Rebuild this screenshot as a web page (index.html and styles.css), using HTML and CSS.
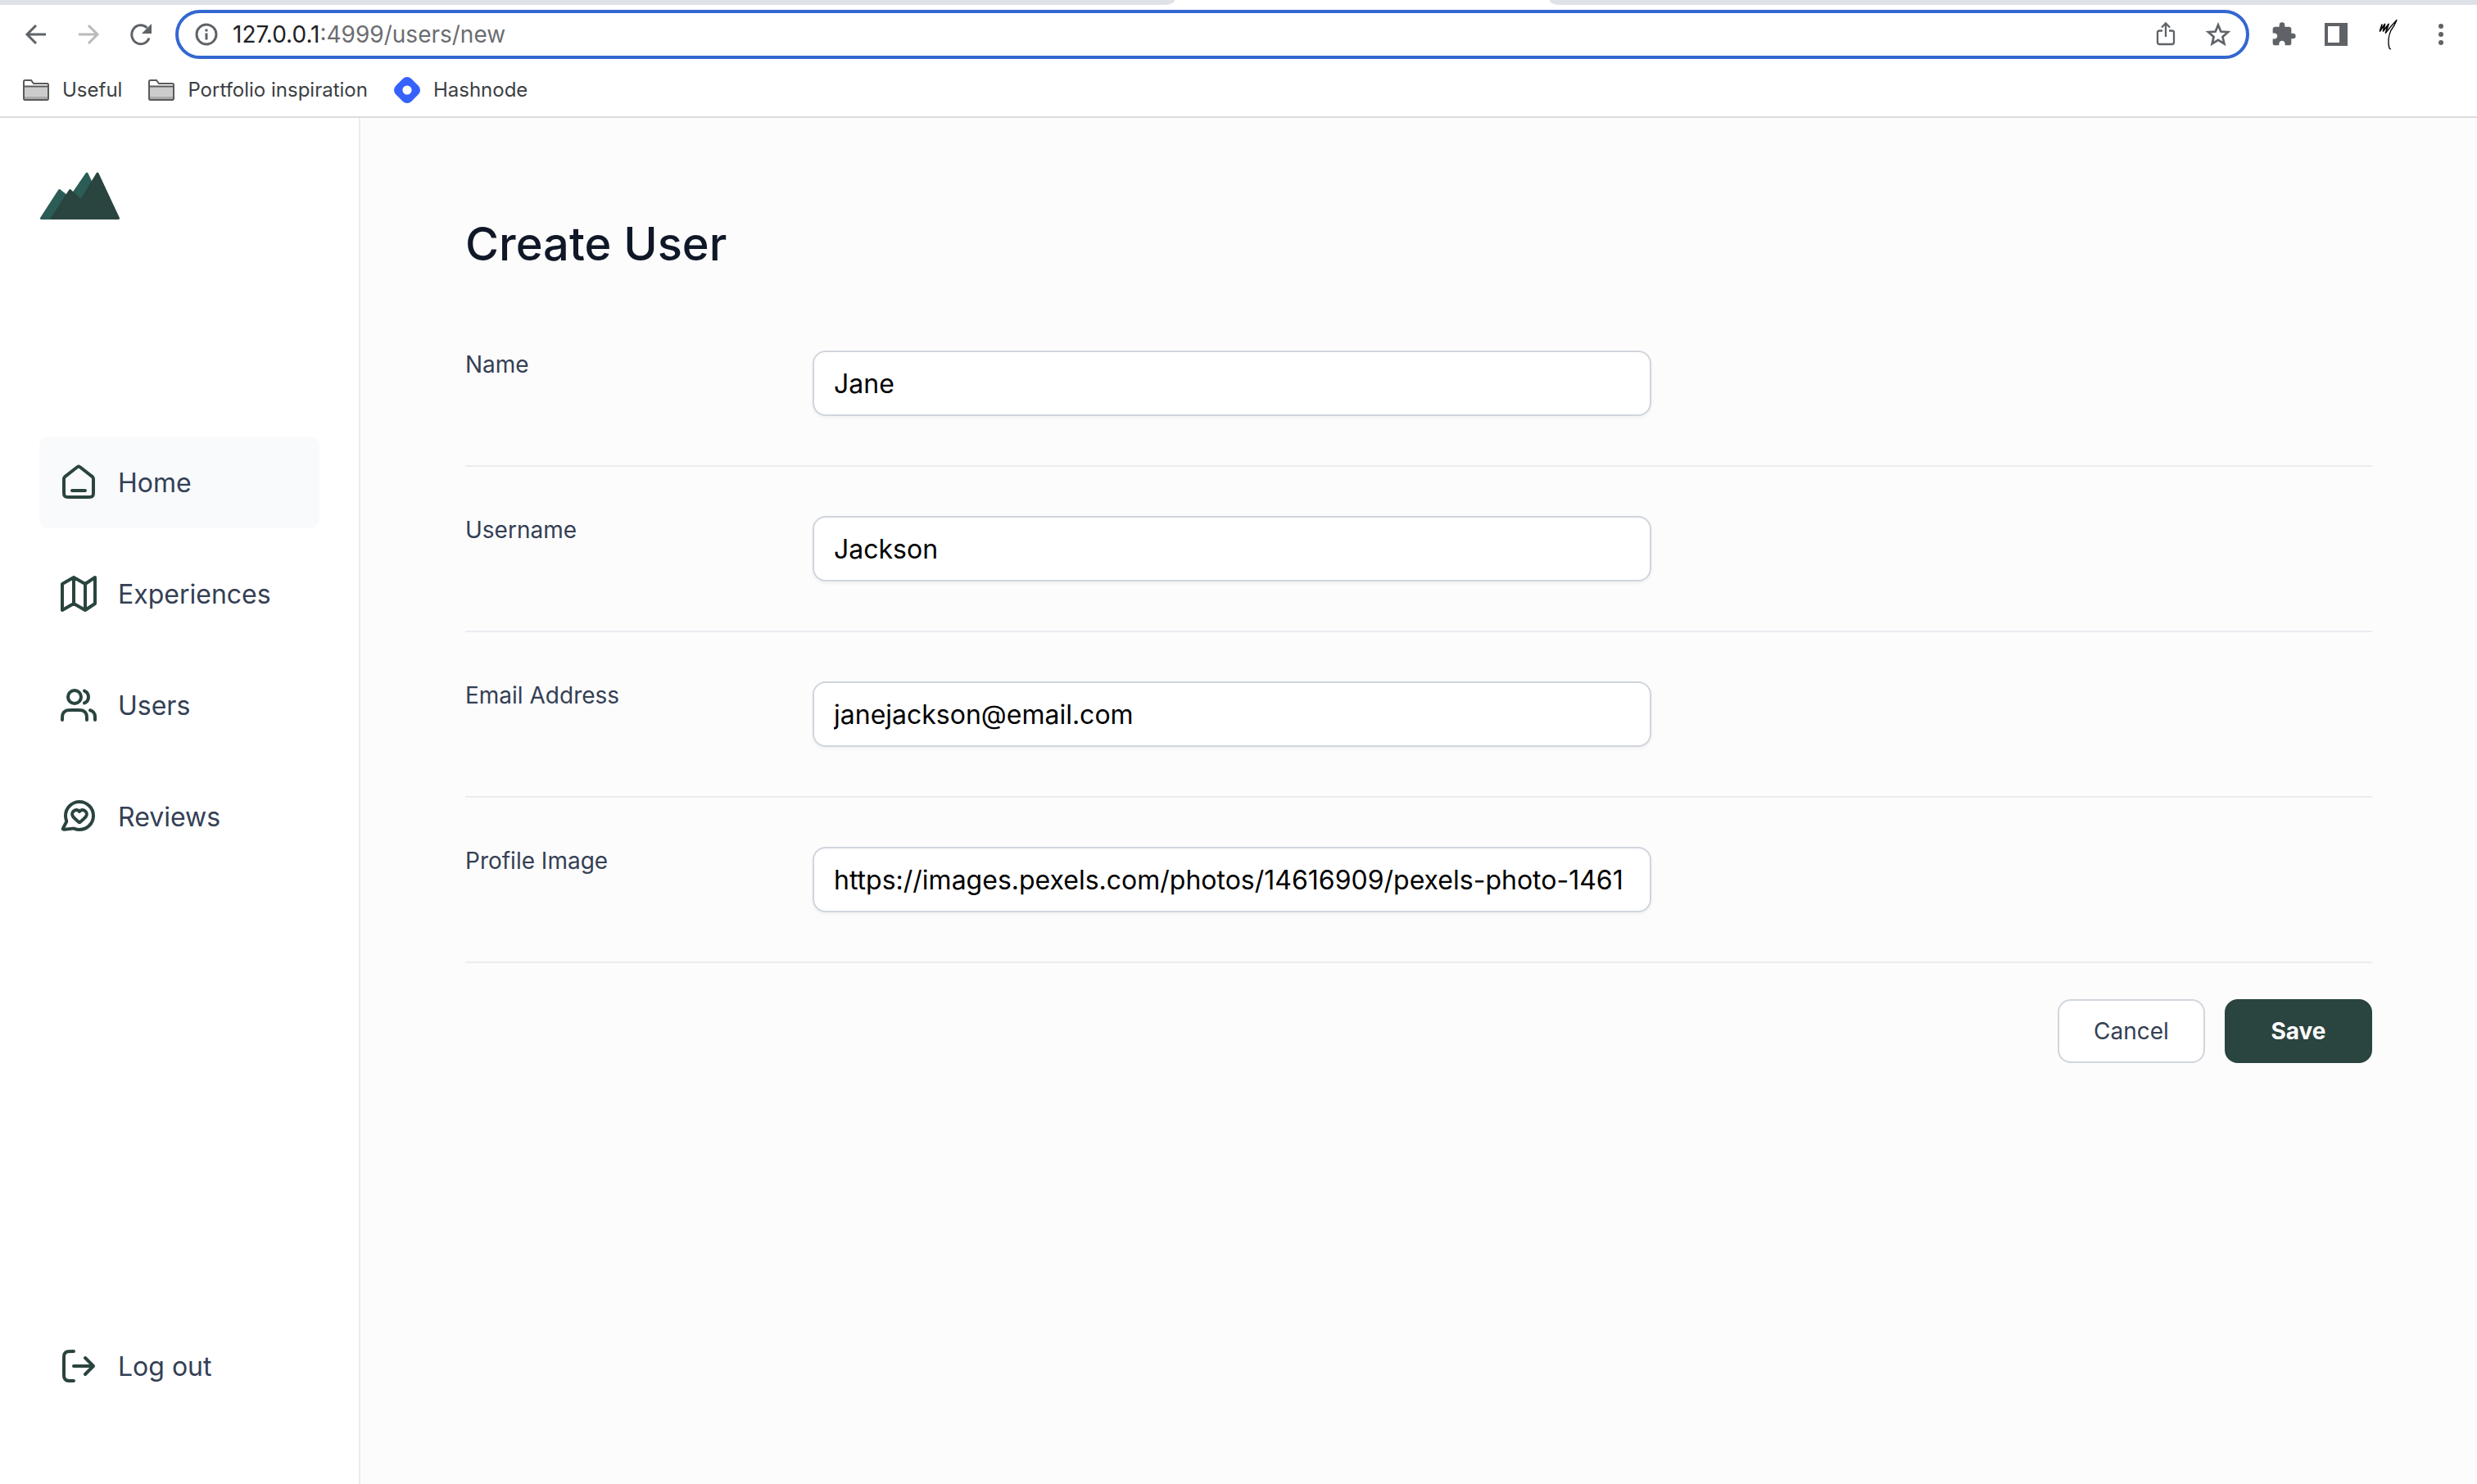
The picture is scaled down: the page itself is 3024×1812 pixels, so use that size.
FILE: index.html
```html
<!DOCTYPE html>
<html lang="en">
<head>
<meta charset="utf-8">
<title>Create User</title>
<link rel="stylesheet" href="styles.css">
</head>
<body>
<header class="browser">
  <div class="tabstrip"><span class="tabs-before"></span><span class="tab-active"></span><span class="tabs-after"></span></div>
  <div class="toolbar">
    <div class="history">
      <button class="tool" type="button" aria-label="Back"><svg width="32" height="32" viewBox="0 0 32 32"><path d="M28 16H5M16 5L5 16l11 11" fill="none" stroke="#5f6368" stroke-width="3"/></svg></button>
      <button class="tool" type="button" aria-label="Forward"><svg width="32" height="32" viewBox="0 0 32 32"><path d="M4 16h23M16 5l11 11-11 11" fill="none" stroke="#bababa" stroke-width="3"/></svg></button>
      <button class="tool" type="button" aria-label="Reload"><svg width="32" height="32" viewBox="0 0 32 32"><path d="M26 20.500A11 11.500 0 1 1 23.500 8" fill="none" stroke="#5f6368" stroke-width="3"/><path d="M29 3v12H17z" fill="#5f6368"/></svg></button>
    </div>
    <div class="omnibox">
      <svg width="28" height="28" viewBox="0 0 28 28"><circle cx="14" cy="14" r="12" fill="none" stroke="#5f6368" stroke-width="3"/><path d="M14 12.500v8M14 7.500v3" stroke="#5f6368" stroke-width="3"/></svg>
      <div class="url" role="textbox" aria-label="Address" contenteditable="true" spellcheck="false"><span class="host">127.0.0.1</span>:4999/users/new</div>
      <button class="tool" type="button" aria-label="Share"><svg width="32" height="32" viewBox="0 0 32 32"><path d="M12 11.500H8.500Q6 11.500 6 14v11.500Q6 28 8.500 28h15q2.500 0 2.500-2.500V14Q26 11.500 23.500 11.500H20M16 19V3M11 7.500l5-5 5 5" fill="none" stroke="#5f6368" stroke-width="2.300"/></svg></button>
      <button class="tool" type="button" aria-label="Bookmark this page"><svg width="32" height="32" viewBox="0 0 32 32"><path d="M16 4.500l3.300 8 8.700.700-6.600 5.700 2 8.500L16 22.900l-7.400 4.500 2-8.500L4 13.200l8.700-.700z" fill="none" stroke="#5f6368" stroke-width="2.700"/></svg></button>
    </div>
    <div class="extensions">
      <button class="tool" type="button" aria-label="Extensions"><svg width="32" height="32" viewBox="0 0 24 24"><path d="M20.500 11H19V7c0-1.100-.9-2-2-2h-4V3.500a2.500 2.500 0 0 0-5 0V5H4c-1.100 0-1.990.9-1.990 2v3.800H3.500c1.490 0 2.700 1.210 2.700 2.700s-1.210 2.700-2.700 2.700H2V20c0 1.100.9 2 2 2h3.800v-1.500c0-1.490 1.210-2.700 2.700-2.700s2.700 1.210 2.700 2.700V22H17c1.100 0 2-.9 2-2v-4h1.500a2.500 2.500 0 0 0 0-5z" fill="#5f6368"/></svg></button>
      <button class="tool" type="button" aria-label="Side panel"><svg width="32" height="32" viewBox="0 0 32 32"><path fill-rule="evenodd" d="M2 2h28v28H2zM6 6v20h14V6z" fill="#5f6368"/></svg></button>
      <button class="tool" type="button" aria-label="Profile"><svg width="32" height="40" viewBox="0 0 32 40"><g fill="none" stroke="#000" stroke-linecap="round" stroke-linejoin="round"><path d="M8 8L5.500 16 11.500 7.500 9.500 16 16 7.500 12.500 18" stroke-width="1.700"/><path d="M12.500 18Q18 11 26 2.500Q23 10 19 15Q14 26 17 37l1.500 1" stroke-width="1.300"/></g></svg></button>
      <button class="tool" type="button" aria-label="Menu"><svg width="32" height="32" viewBox="0 0 32 32" fill="#5f6368"><circle cx="16" cy="6" r="3"/><circle cx="16" cy="16" r="3"/><circle cx="16" cy="26" r="3"/></svg></button>
    </div>
  </div>
  <nav class="bookmarks" aria-label="Bookmarks">
    <a class="bookmark" href="#"><svg width="32" height="26" viewBox="0 0 32 26"><path d="M1 8h30v16H1z" fill="#ccc"/><path d="M1 21h30v3H1z" fill="#aaa"/><path d="M1 23V2.500Q1 1 2.500 1H10l3 4h16.500Q31 5 31 6.500V23q0 2-1.500 2h-27Q1 25 1 23zM1 8.500h30" fill="none" stroke="#5a5a5a" stroke-width="2"/></svg>Useful</a>
    <a class="bookmark" href="#"><svg width="32" height="26" viewBox="0 0 32 26"><path d="M1 8h30v16H1z" fill="#ccc"/><path d="M1 21h30v3H1z" fill="#aaa"/><path d="M1 23V2.500Q1 1 2.500 1H10l3 4h16.500Q31 5 31 6.500V23q0 2-1.500 2h-27Q1 25 1 23zM1 8.500h30" fill="none" stroke="#5a5a5a" stroke-width="2"/></svg>Portfolio inspiration</a>
    <a class="bookmark" href="#"><svg width="32" height="32" viewBox="0 0 32 32"><path fill-rule="evenodd" d="M2.200 10.700l8.500-8.500a7.500 7.500 0 0 1 10.600 0l8.500 8.500a7.500 7.500 0 0 1 0 10.600l-8.500 8.500a7.500 7.500 0 0 1-10.600 0l-8.500-8.500a7.500 7.500 0 0 1 0-10.600zM16 10.400a5.600 5.600 0 1 0 0 11.200 5.600 5.600 0 0 0 0-11.200z" fill="#3662fb"/></svg>Hashnode</a>
  </nav>
</header>
<div class="app">
  <aside class="sidebar">
    <a class="logo" href="#" aria-label="Dashboard"><svg width="98" height="60" viewBox="0 0 98 60" stroke-width="3" stroke-linejoin="round"><path d="M2.500 58.500L24.500 24.500 37 34.500 58 4l26 54.500z" fill="#2b5c56" stroke="#2b5c56"/><path d="M15.500 58.500L37.500 24.500 51 37 71 4l25.500 54.500z" fill="#2a443f" stroke="#2a443f"/></svg></a>
    <nav class="menu" aria-label="Main">
      <a class="item current" href="#"><svg class="icon" viewBox="0 0 24 24"><path d="M8 17H16M11.0177 2.764L4.23539 8.03912C3.78202 8.39175 3.55534 8.56806 3.39203 8.78886C3.24737 8.98444 3.1396 9.20478 3.07403 9.43905C3 9.70352 3 9.9907 3 10.5651V17.8C3 18.9201 3 19.4801 3.21799 19.908C3.40973 20.2843 3.71569 20.5903 4.09202 20.782C4.51984 21 5.07989 21 6.2 21H17.8C18.9201 21 19.4802 21 19.908 20.782C20.2843 20.5903 20.5903 20.2843 20.782 19.908C21 19.4801 21 18.9201 21 17.8V10.5651C21 9.9907 21 9.70352 20.926 9.43905C20.8604 9.20478 20.7526 8.98444 20.6079 8.78886C20.4447 8.56806 20.218 8.39175 19.7646 8.03913L12.9823 2.764C12.631 2.49075 12.4553 2.35412 12.2613 2.3016C12.0902 2.25526 11.9098 2.25526 11.7387 2.3016C11.5447 2.35412 11.369 2.49075 11.0177 2.764Z"/></svg><span class="item-text">Home</span></a>
      <a class="item" href="#"><svg class="icon" viewBox="0 0 24 24"><path d="M9 18L2 22V6L9 2M9 18L16 22M9 18V2M16 22L22 18V2L16 6M16 22V6M16 6L9 2"/></svg><span class="item-text">Experiences</span></a>
      <a class="item" href="#"><svg class="icon" viewBox="0 0 24 24"><path d="M22 21V19C22 17.1362 20.7252 15.5701 19 15.126M15.5 3.29076C16.9659 3.88415 18 5.32131 18 7C18 8.67869 16.9659 10.1159 15.5 10.7092M17 21C17 19.1362 17 18.2044 16.6955 17.4693C16.2895 16.4892 15.5108 15.7105 14.5307 15.3045C13.7956 15 12.8638 15 11 15H8C6.13623 15 5.20435 15 4.46927 15.3045C3.48915 15.7105 2.71046 16.4892 2.30448 17.4693C2 18.2044 2 19.1362 2 21M13.5 7C13.5 9.20914 11.7091 11 9.5 11C7.29086 11 5.5 9.20914 5.5 7C5.5 4.79086 7.29086 3 9.5 3C11.7091 3 13.5 4.79086 13.5 7Z"/></svg><span class="item-text">Users</span></a>
      <a class="item" href="#"><svg class="icon" viewBox="0 0 24 24"><path d="M21 11.5C21 16.1944 17.1944 20 12.5 20C11.4237 20 10.3939 19.8 9.44691 19.4353C9.27377 19.3687 9.1872 19.3353 9.11835 19.3194C9.05062 19.3037 9.00161 19.2972 8.93213 19.2945C8.86151 19.2918 8.78404 19.2998 8.62909 19.3158L3.50501 19.8455C3.01648 19.896 2.77221 19.9213 2.62812 19.8334C2.50262 19.7569 2.41712 19.6288 2.39423 19.4836C2.36794 19.3169 2.48466 19.1008 2.71811 18.6687L4.35472 15.6393C4.4895 15.3898 4.55689 15.2651 4.58741 15.1451C4.61756 15.0266 4.62485 14.9411 4.61518 14.8192C4.60539 14.6958 4.55127 14.5351 4.44302 14.2139C4.15563 13.361 4 12.4475 4 11.5C4 6.80558 7.80558 3 12.5 3C17.1944 3 21 6.80558 21 11.5Z"/><path d="M12.500 8.950C11.600 7.900 10.100 7.700 9.000 8.600C7.900 9.500 7.800 11.050 8.650 12.100C9.300 12.900 11.200 14.600 12.060 15.350C12.220 15.490 12.300 15.560 12.400 15.590C12.460 15.610 12.540 15.610 12.600 15.590C12.700 15.560 12.780 15.490 12.940 15.350C13.800 14.600 15.700 12.900 16.350 12.100C17.200 11.050 17.100 9.500 16.000 8.600C14.900 7.700 13.400 7.900 12.500 8.950Z"/></svg><span class="item-text">Reviews</span></a>
    </nav>
    <a class="item logout" href="#"><svg class="icon" viewBox="0 0 24 24"><path d="M16 17L21 12L16 7M21 12H9M9 3H7.8C6.11984 3 5.27976 3 4.63803 3.32698C4.07354 3.6146 3.6146 4.07354 3.32698 4.63803C3 5.27976 3 6.11984 3 7.8V16.2C3 17.8802 3 18.7202 3.32698 19.362C3.6146 19.9265 4.07354 20.3854 4.63803 20.673C5.27976 21 6.11984 21 7.8 21H9"/></svg><span class="item-text">Log out</span></a>
  </aside>
  <main class="content">
    <h1>Create User</h1>
    <form class="form">
      <div class="row"><label for="name">Name</label><input id="name" type="text" value="Jane"></div>
      <div class="row"><label for="username">Username</label><input id="username" type="text" value="Jackson"></div>
      <div class="row"><label for="email">Email Address</label><input id="email" type="text" value="janejackson@email.com"></div>
      <div class="row"><label for="image">Profile Image</label><input id="image" type="text" value="https://images.pexels.com/photos/14616909/pexels-photo-1461"></div>
      <div class="actions"><button class="button" type="button">Cancel</button><button class="button primary" type="submit">Save</button></div>
    </form>
  </main>
</div>
</body>
</html>
```
FILE: styles.css
```css
* { box-sizing: border-box; }

body {
  margin: 0;
  min-height: 100vh;
  display: flex;
  flex-direction: column;
  font-family: Inter, "Liberation Sans", sans-serif;
  background: #fcfcfc;
  color: #344054;
}

a { color: inherit; text-decoration: none; }
svg { display: block; flex: none; }

/* Browser frame */
.browser {
  background: #fff;
  border-bottom: 2px solid #dcdcdc;
}

.tabstrip { display: flex; height: 6px; }
.tabs-before, .tabs-after { background: #dee1e6; }
.tabs-before { flex: 1434; border-bottom-right-radius: 12px 6px; }
.tab-active { flex: 458; }
.tabs-after { flex: 1132; border-bottom-left-radius: 12px 6px; }

.toolbar {
  display: flex;
  align-items: center;
  height: 72px;
  padding: 0 28px;
}

.history, .extensions { display: flex; align-items: center; gap: 32px; }
.history { margin-right: 26px; }
.extensions { margin-left: 26px; }

.tool {
  display: flex;
  padding: 0;
  border: 0;
  background: none;
}

.omnibox {
  flex: 1;
  display: flex;
  align-items: center;
  gap: 32px;
  height: 60px;
  padding: 0 18px 0 20px;
  border: 4px solid #3367d1;
  border-radius: 30px;
}

.url {
  flex: 1;
  margin-left: -14px;
  font-size: 28px;
  line-height: 36px;
  color: #6b6d70;
  outline: 0;
}
.host { color: #202124; }

.bookmarks {
  display: flex;
  align-items: center;
  gap: 32px;
  height: 64px;
  padding: 0 28px;
}
.bookmark {
  display: flex;
  align-items: center;
  gap: 16px;
  font-size: 24px;
  line-height: 32px;
  color: #3c4043;
}

/* Application */
.app { flex: 1; display: flex; }

.sidebar {
  display: flex;
  flex-direction: column;
  width: 440px;
  padding: 64px 48px 88px;
  background: #fff;
  border-right: 2px solid #eaecf0;
}

.menu {
  display: flex;
  flex-direction: column;
  gap: 24px;
  margin-top: 265px;
}

.item {
  display: flex;
  align-items: center;
  gap: 24px;
  height: 112px;
  padding: 0 24px;
  border-radius: 12px;
  font-size: 32px;
  line-height: 48px;
}
.item-text { padding-top: 2px; }
.current { background: #f9fafc; }
.logout { margin-top: auto; }

.icon {
  width: 48px;
  height: 48px;
  fill: none;
  stroke: #2a443f;
  stroke-width: 2;
  stroke-linecap: round;
  stroke-linejoin: round;
}

.content {
  flex: 1;
  padding: 116px 128px 64px;
}

h1 {
  margin: 0 0 62px;
  font-size: 56px;
  font-weight: 500;
  line-height: 76px;
  color: #101828;
}

.form { display: flex; flex-direction: column; }

.row {
  display: grid;
  grid-template-columns: 400px minmax(0, 1024px);
  column-gap: 24px;
  align-items: start;
  padding: 30px 0 60px;
  border-bottom: 2px solid #eaecf0;
}
.row + .row { padding-top: 60px; }

.row label { font-size: 28px; line-height: 34px; }

.row input {
  width: 100%;
  height: 80px;
  padding: 0 24px;
  border: 2px solid #d0d5dd;
  border-radius: 16px;
  background: #fff;
  box-shadow: 0 2px 4px rgba(16, 24, 40, 0.05);
  font: 32px Inter, "Liberation Sans", sans-serif;
  color: #000;
}

.actions {
  display: flex;
  justify-content: flex-end;
  gap: 24px;
  padding-top: 44px;
}

.button {
  width: 180px;
  height: 78px;
  padding: 0;
  border: 2px solid #d0d5dd;
  border-radius: 16px;
  background: #fff;
  font: 28px Inter, "Liberation Sans", sans-serif;
  color: #344054;
}
.primary {
  border-color: #2a443f;
  background: #2a443f;
  font-weight: 700;
  color: #fff;
}
```
